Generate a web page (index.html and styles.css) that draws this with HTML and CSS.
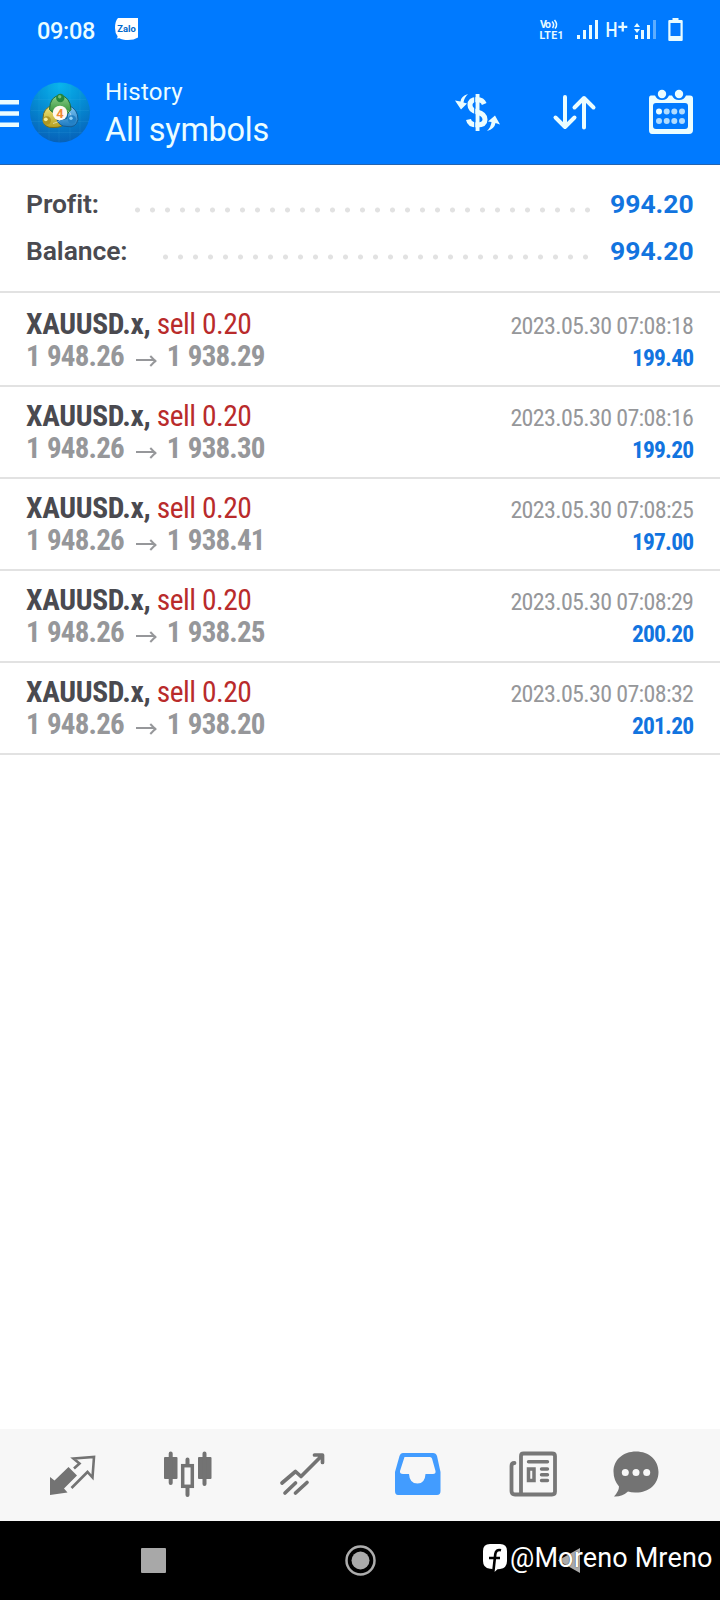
FILE: index.html
```html
<!DOCTYPE html>
<html lang="en">
<head>
<meta charset="utf-8">
<title>History</title>
<link rel="stylesheet" href="styles.css">
</head>
<body>
<div class="screen">
  <header class="top">
    <div class="status">
      <span class="clock">09:08</span>
      <svg class="zalo" width="24" height="24" viewBox="115 17 24 24"><path fill="#fff" d="M118 18H138V37.500Q134 40 128 40Q122 40 119.500 38.200L116.500 38.500Q117.800 37.600 117.600 36.300Q115 33 115 28Q115 21 118 18Z"/><text x="117.200" y="32" textLength="18.500" lengthAdjust="spacingAndGlyphs" class="zalo-text">Zalo</text></svg>
      <svg class="signals" width="150" height="32" viewBox="538 14 150 32">
        <g fill="#e8fbff">
          <text x="540" y="28.200" class="net" textLength="11">Vo</text>
          <text x="539.500" y="39" class="net" textLength="24">LTE1</text>
          <path d="M552 21.500Q555 24.500 552.500 28M554.500 20Q558.500 24.500 555 28.500" fill="none" stroke="#e8fbff" stroke-width="1.500"/>
          <path d="M577 35h3v4h-3zM583 30h3v9h-3zM589 25h3v14h-3zM595 20h3v19h-3z"/>
          <text x="605.500" y="36.700" class="hplus" textLength="12" lengthAdjust="spacingAndGlyphs">H</text>
          <path d="M618.300 25.700h9v2.300h-9zM621.600 22h2.300v9.500h-2.300z"/>
          <path d="M634 27l3-4 3 4zM634 29h6l-3 4zM635 35h3v4h-3zM641 30h3v9h-3zM647 25h3v14h-3z"/>
          <path opacity=".4" d="M653 20h3v19h-3z"/>
          <path fill-rule="evenodd" d="M672.500 18h6v2h3.200q1 0 1 1v19q0 1-1 1h-12.400q-1 0-1-1v-19q0-1 1-1h3.200zM670.500 23v13h10V23z"/>
        </g>
      </svg>
    </div>
    <div class="bar">
      <svg class="menu" width="20" height="30" viewBox="0 98 20 30"><path fill="#ebfdff" d="M0 100h19v4.500H0zM0 111.200h19v4.500H0zM0 122.600h19v4.500H0z"/></svg>
      <svg class="logo" width="60" height="61" viewBox="30 81.500 60 61">
        <defs>
          <radialGradient id="sky" cx=".5" cy=".05" r=".95"><stop offset="0" stop-color="#08b4ed"/><stop offset=".55" stop-color="#0587d0"/><stop offset="1" stop-color="#0761b8"/></radialGradient>
          <linearGradient id="green" x2="0" y2="1"><stop stop-color="#8ed08b"/><stop offset="1" stop-color="#2f8f35"/></linearGradient>
          <linearGradient id="gold" x2="0" y2="1"><stop stop-color="#f0e77c"/><stop offset="1" stop-color="#b5a022"/></linearGradient>
          <linearGradient id="blue" x2="0" y2="1"><stop stop-color="#81c9f5"/><stop offset="1" stop-color="#1b78c0"/></linearGradient>
        </defs>
        <circle cx="60" cy="112" r="30" fill="url(#sky)"/>
        <path d="M39 91V133M49 84.500V140M59 82V142M70 84V140M80 90V134M34 99H86M31 110H89M31 121H89M38 132H82" stroke="#5cc6f5" stroke-opacity=".1" fill="none"/>
        <path d="M53 105Q43 107 43 118Q43 128 54 127Q62 127 65 123L58 118Z" fill="url(#gold)" stroke="#746d20"/>
        <path d="M69 105Q78 109 78 119Q76 128 67 126Q60 126 57 120L67 118Z" fill="url(#blue)" stroke="#155d95"/>
        <path d="M49.500 109Q50 95 60.500 95Q70 96 71 109L68 113H54Z" fill="url(#green)" stroke="#1e6b3a"/>
        <path d="M53 123Q58 122 60 119.500M68 110Q71 113 71 115" stroke="#fff" stroke-opacity=".5" fill="none"/>
        <circle cx="60.300" cy="97.500" r="4.200" fill="#23863e"/><circle cx="59.700" cy="96.200" r="1.700" fill="#76be78"/>
        <circle cx="46.800" cy="120" r="4.200" fill="#ad9623"/><circle cx="45.800" cy="118.800" r="1.900" fill="#f3ec9a"/>
        <circle cx="72" cy="119" r="4.200" fill="#2280c5"/><circle cx="71" cy="117.800" r="1.700" fill="#8ed0f7"/>
        <circle cx="60" cy="112.500" r="7.300" fill="#fff8f0"/>
        <text x="60" y="117.300" text-anchor="middle" class="four">4</text>
      </svg>
      <div class="titles"><div class="title">History</div><div class="subtitle">All symbols</div></div>
      <svg class="actions" width="250" height="60" viewBox="450 82 250 60">
        <g fill="none" stroke="#ebfdff" stroke-width="4">
          <path d="M484.200 104Q482.500 99.500 477 99.500Q470 99.500 470 105Q470 110 477 112Q485 114 485 119.500Q485 125 477 125Q469.500 125 468.500 119.500" stroke-width="5"/>
          <path d="M477.500 94V131"/>
          <path d="M474.700 93V132" stroke="#007aff" stroke-width="1"/>
          <path d="M565 97V127M555.500 117.500L565 127L574.500 117.500M584 127.500V98M574.500 107.500L584 98L593.500 107.500" stroke-linecap="round" stroke-linejoin="round"/>
        </g>
        <g fill="#ebfdff">
          <path d="M468 94Q461 96 460.500 101.500L455 100.500L461 109.500L467 103.500L463.500 102.500Q464 98 468 94Z"/>
          <path d="M487 131Q494.500 129 495.500 123L500 124.500L495 115.500L488 121.500L491.500 122Q491 127 487 131Z"/>
          <path fill-rule="evenodd" d="M651 95.500H655Q657 100 662 100Q667 100 669 95.500H672Q674 100 679 100Q684 100 686 95.500H690Q693 95.500 693 98.500V130Q693 134 689 134H652Q649 134 649 130V98.500Q649 95.500 651 95.500ZM656 103Q653 103 653 106V126Q653 129 656 129H685Q688 129 688 126V106Q688 103 685 103Z"/>
          <circle cx="662" cy="94" r="4.200"/><circle cx="679" cy="94" r="4.200"/>
          <circle cx="659" cy="111.500" r="3"/>
          <g opacity=".75"><circle cx="666.700" cy="111.500" r="3"/><circle cx="674.300" cy="111.500" r="3"/><circle cx="682" cy="111.500" r="3"/><circle cx="659" cy="121" r="3"/><circle cx="666.700" cy="121" r="3"/><circle cx="674.300" cy="121" r="3"/><circle cx="682" cy="121" r="3"/></g>
        </g>
      </svg>
    </div>
  </header>
  <main>
    <section class="summary">
      <div class="total"><span class="label">Profit:</span><span class="dots profit-dots"></span><span class="amount">994.20</span></div>
      <div class="total"><span class="label">Balance:</span><span class="dots balance-dots"></span><span class="amount">994.20</span></div>
    </section>
    <section class="deals">
      <article class="deal"><div class="left"><p class="symbol"><b>XAUUSD.x,</b> <span>sell 0.20</span></p><p class="prices">1 948.26 <i></i> 1 938.29</p></div><div class="right"><time>2023.05.30 07:08:18</time><p class="gain">199.40</p></div></article>
      <article class="deal"><div class="left"><p class="symbol"><b>XAUUSD.x,</b> <span>sell 0.20</span></p><p class="prices">1 948.26 <i></i> 1 938.30</p></div><div class="right"><time>2023.05.30 07:08:16</time><p class="gain">199.20</p></div></article>
      <article class="deal"><div class="left"><p class="symbol"><b>XAUUSD.x,</b> <span>sell 0.20</span></p><p class="prices">1 948.26 <i></i> 1 938.41</p></div><div class="right"><time>2023.05.30 07:08:25</time><p class="gain">197.00</p></div></article>
      <article class="deal"><div class="left"><p class="symbol"><b>XAUUSD.x,</b> <span>sell 0.20</span></p><p class="prices">1 948.26 <i></i> 1 938.25</p></div><div class="right"><time>2023.05.30 07:08:29</time><p class="gain">200.20</p></div></article>
      <article class="deal"><div class="left"><p class="symbol"><b>XAUUSD.x,</b> <span>sell 0.20</span></p><p class="prices">1 948.26 <i></i> 1 938.20</p></div><div class="right"><time>2023.05.30 07:08:32</time><p class="gain">201.20</p></div></article>
    </section>
  </main>
  <nav class="tabs">
    <svg width="115" height="92" viewBox="15 1429 115 92"><path fill="#737373" d="M50 1477L54.500 1480.500L68.500 1467L77 1475.500L64 1488.500L67.500 1492.500L50 1495Z"/><path fill="none" stroke="#737373" stroke-width="2.600" d="M74 1468.500L79.500 1463.500L73.500 1458.500L94 1457L92.500 1477.500L87.500 1472L71.500 1488"/></svg>
    <svg width="115" height="92" viewBox="130 1429 115 92"><g fill="#737373"><rect x="164" y="1457" width="13.500" height="22" rx="1"/><rect x="198" y="1457" width="13.500" height="22" rx="1"/></g><path d="M170.700 1453.500V1483M204.500 1453.500V1484M187.500 1459.500V1465M187.500 1487V1495" stroke="#737373" stroke-width="4" stroke-linecap="round"/><rect x="182.700" y="1465.700" width="9.600" height="20.600" fill="none" stroke="#737373" stroke-width="3.500"/></svg>
    <svg width="115" height="92" viewBox="245 1429 115 92"><path fill="none" stroke="#737373" stroke-width="3.700" stroke-linecap="round" stroke-linejoin="round" d="M282 1483L295.500 1471.500L301 1476.500L321.500 1456M314.500 1455H322.500V1462.500M285 1493L295.500 1483M295.500 1493L307 1482.500"/></svg>
    <svg width="115" height="92" viewBox="360 1429 115 92"><path fill="#429cff" fill-rule="evenodd" d="M403 1453H433Q436 1453 437 1456L440.500 1472V1491Q440.500 1495 437 1495H398Q395 1495 395 1491V1472L399.500 1456Q400.500 1453 403 1453ZM404.500 1457L400 1471Q399.500 1474 403 1474H409Q409.500 1483.500 417.500 1483.500Q425 1483.500 425.500 1474H433Q436 1474 435.500 1471L432 1458.500Q431.500 1457 430 1457Z"/></svg>
    <svg width="115" height="92" viewBox="475 1429 115 92"><g fill="none" stroke="#777"><path stroke-width="3.800" d="M514.500 1463Q511.500 1463 511.500 1466V1491Q511.500 1494.500 515 1494.500H552Q555 1494.500 555 1491.500V1456Q555 1453.500 552 1453.500H523.500Q521 1453.500 521 1456V1493" stroke-linecap="round"/><path stroke-width="3.400" stroke-linecap="round" d="M528.500 1461.800H547.500M541.500 1469H547.500M541.500 1474.700H547.500M541.500 1480.500H547.500"/><rect x="528.500" y="1469" width="5.500" height="11.500" stroke-width="3.500"/></g></svg>
    <svg width="115" height="92" viewBox="590 1429 115 92"><path fill="#737373" d="M636 1451.500C649 1451.500 658.500 1460 658.500 1472C658.500 1485 648 1493 635 1492.500Q631 1492.500 628 1491.500Q622 1497 614 1496.500Q619 1491 619 1486.500Q613.500 1480 613.500 1471.500C613.500 1460 623 1451.500 636 1451.500Z"/><g fill="#f7f7f7"><circle cx="625.300" cy="1472.500" r="3.500"/><circle cx="636" cy="1472.500" r="3.500"/><circle cx="646.700" cy="1472.500" r="3.500"/></g></svg>
  </nav>
  <footer class="system">
    <svg width="720" height="79" viewBox="0 1521 720 79"><rect x="141" y="1548" width="25" height="25" rx="1" fill="#a8a8a8"/><circle cx="360.500" cy="1560.500" r="14" fill="none" stroke="#adadad" stroke-width="2.500"/><circle cx="360.500" cy="1560.500" r="9" fill="#aaa"/><path d="M580 1548V1573L558 1560.500Z" fill="#aaa"/></svg>
    <div class="watermark"><svg width="26" height="29" viewBox="482 1543 26 29"><path fill="#fff" d="M490 1544H500Q507 1544 507 1551V1561Q507 1568 500 1569L497.500 1569.200L494.500 1572L492.500 1569L490 1568.800Q483 1568 483 1561V1551Q483 1544 490 1544Z"/><path d="M501 1550.300Q496 1549 495.300 1554L493.300 1572M489 1558H500" fill="none" stroke="#000" stroke-width="2.600"/></svg><span>@Moreno Mreno</span></div>
  </footer>
</div>
</body>
</html>
```
FILE: styles.css
```css
* { box-sizing: border-box; }
body { margin: 0; font-family: Roboto, "Liberation Sans", sans-serif; background: #fff; }
p { margin: 0; }
svg { display: block; flex: none; }
.screen { width: 720px; height: 1600px; display: flex; flex-direction: column; }
.top { height: 165px; background: #007aff; border-bottom: 1px solid #2464b0; color: #ebfdff; }
.status { height: 60px; display: flex; padding-left: 37px; }
.clock { width: 78px; padding-top: 16px; font-size: 23.5px; line-height: 30px; font-weight: 500; letter-spacing: -.3px; }
.zalo { margin-top: 17px; }
.zalo-text { font: 700 8.5px Roboto, sans-serif; fill: #0068ca; }
.signals { margin: 14px 0 0 399px; }
.net { font: 700 10.5px Roboto, sans-serif; }
.hplus { font: 500 19.5px Roboto, sans-serif; }
.bar { height: 104px; display: flex; }
.menu { margin-top: 38px; }
.logo { margin: 21.5px 0 0 10px; }
.four { font: 700 13px Roboto, sans-serif; fill: #f08a35; }
.titles { width: 360px; padding: 17px 0 0 15px; white-space: nowrap; }
.title { font-size: 24px; line-height: 30px; letter-spacing: .2px; }
.subtitle { font-size: 32.5px; line-height: 40px; margin-top: 3px; letter-spacing: -.3px; }
.actions { margin-top: 22px; }
main { flex: 1; }
.summary { height: 128px; padding: 15px 26px 0; border-bottom: 2px solid #e2e2e2; }
.total { height: 47px; display: flex; font-size: 26.5px; line-height: 47px; }
.label { color: #4a4a50; font-weight: 600; letter-spacing: -.1px; }
.dots { height: 6px; margin-top: 26.5px; margin-left: auto; background: radial-gradient(circle at 7.5px 3px, #e2e2e2 2.1px, transparent 2.9px) 0 0 / 15px 6px; }
.profit-dots { width: 465px; margin-right: 15px; }
.balance-dots { width: 435px; margin-right: 17px; }
.amount { color: #1274df; font-weight: 700; width: 84px; padding-right: 1px; text-align: right; }
.deal { height: 92px; padding: 12px 26px 0; border-bottom: 2px solid #e2e2e2; display: flex; justify-content: space-between; font-family: "Roboto Condensed", Roboto, sans-serif; font-stretch: 75%; white-space: nowrap; }
.deal:first-child { height: 94px; padding-top: 14px; }
.symbol { font-size: 29.5px; line-height: 34px; color: #4a4a50; letter-spacing: -.35px; }
.symbol span { color: #b92b2b; letter-spacing: -.5px; }
.prices { font-size: 29px; line-height: 32px; margin-top: -1px; font-weight: 700; letter-spacing: -.8px; word-spacing: 1.2px; color: #96979a; display: flex; }
.prices i { width: 20px; height: 9px; margin: 15px 11px 0 12px; background: linear-gradient(#96979a, #96979a) 0 4px / 18px 2px no-repeat; position: relative; }
.prices i::after { content: ""; position: absolute; right: 1px; top: 2px; width: 6px; height: 6px; border: solid #96979a; border-width: 2px 2px 0 0; transform: rotate(45deg); }
.right { text-align: right; padding: 4px .7px 0 0; }
time { display: block; font-size: 24px; line-height: 30px; letter-spacing: -.65px; color: #96979a; }
.gain { font-size: 23.5px; line-height: 30px; margin-top: 2px; font-weight: 700; letter-spacing: -.8px; color: #1274df; }
.tabs { height: 92px; background: #f7f7f7; padding-left: 15px; display: flex; }
.system { height: 79px; background: #000; position: relative; }
.watermark { position: absolute; left: 482px; top: 22px; display: flex; color: #fff; font-size: 27px; line-height: 30px; letter-spacing: .15px; white-space: nowrap; gap: 2px; text-shadow: 0 0 1px #000; }
```
